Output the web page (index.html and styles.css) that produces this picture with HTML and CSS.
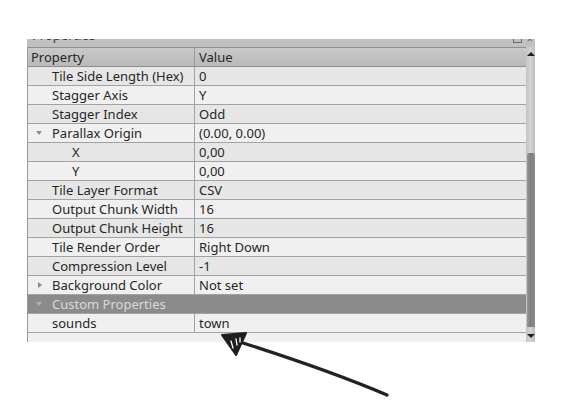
FILE: index.html
```html
<!DOCTYPE html>
<html>
<head>
<meta charset="utf-8">
<link rel="stylesheet" href="styles.css">
</head>
<body>
<div class="page">
  <div class="panel">
    <div class="titlebar">
      <span class="title">Properties</span>
      <span class="tbtns"><span class="tb-float"></span><span class="tb-close">×</span></span>
    </div>
    <div class="body">
      <div class="table">
        <div class="row head"><div class="c1">Property</div><div class="c2">Value</div></div>
        <div class="row a"><div class="c1 l1">Tile Side Length (Hex)</div><div class="c2">0</div></div>
        <div class="row b"><div class="c1 l1">Stagger Axis</div><div class="c2">Y</div></div>
        <div class="row a"><div class="c1 l1">Stagger Index</div><div class="c2">Odd</div></div>
        <div class="row b"><div class="c1 l1"><span class="exp down"></span>Parallax Origin</div><div class="c2">(0.00, 0.00)</div></div>
        <div class="row a"><div class="c1 l2">X</div><div class="c2">0,00</div></div>
        <div class="row b"><div class="c1 l2">Y</div><div class="c2">0,00</div></div>
        <div class="row a"><div class="c1 l1">Tile Layer Format</div><div class="c2">CSV</div></div>
        <div class="row b"><div class="c1 l1">Output Chunk Width</div><div class="c2">16</div></div>
        <div class="row a"><div class="c1 l1">Output Chunk Height</div><div class="c2">16</div></div>
        <div class="row b"><div class="c1 l1">Tile Render Order</div><div class="c2">Right Down</div></div>
        <div class="row a"><div class="c1 l1">Compression Level</div><div class="c2">-1</div></div>
        <div class="row b"><div class="c1 l1"><span class="exp right"></span>Background Color</div><div class="c2">Not set</div></div>
        <div class="row group"><div class="gl l1"><span class="exp down light"></span>Custom Properties</div></div>
        <div class="row b"><div class="c1 l1">sounds</div><div class="c2">town</div></div>
        <div class="filler"></div>
      </div>
      <div class="scrollbar">
        <div class="sb-up"></div>
        <div class="sb-track"><div class="sb-thumb"></div></div>
        <div class="sb-down"></div>
      </div>
    </div>
  </div>
  <svg class="annot" width="570" height="417" viewBox="0 0 570 417">
    <path d="M243 343 C 290 358, 340 375, 387 395" stroke="#222" stroke-width="3.2" fill="none" stroke-linecap="round"/>
    <path d="M222 335 L246 333 L236 355 Z" fill="#1e1e1e" stroke="#1e1e1e" stroke-width="2" stroke-linejoin="round"/>
    <path d="M231 341 L233 348 M236 339 L237 345 M240 338 L240 342" stroke="#fff" stroke-width="1.3" stroke-linecap="round"/>
  </svg>
</div>
</body>
</html>
```
FILE: styles.css
```css
html, body {
  margin: 0;
  padding: 0;
  background: #ffffff;
}
.page {
  position: relative;
  width: 570px;
  height: 417px;
  padding-top: 39px;
  padding-left: 27px;
  box-sizing: border-box;
  font-family: "Noto Sans", "Open Sans", sans-serif;
  font-size: 13px;
  color: #262626;
}
.panel {
  width: 508px;
  height: 303px;
  display: flex;
  flex-direction: column;
  background: #c0c0c0;
}
.titlebar {
  height: 8px;
  overflow: hidden;
  display: flex;
  justify-content: space-between;
  background: #c0c0c0;
  position: relative;
}
.title {
  display: block;
  margin-top: -12px;
  padding-left: 5px;
  line-height: 16px;
  color: #3a3a3a;
}
.tbtns {
  display: flex;
  gap: 5px;
  margin-top: -5px;
  padding-right: 2px;
}
.tb-float {
  display: block;
  width: 9px;
  height: 9px;
  border: 1px solid #6a6a6a;
  box-sizing: border-box;
}
.tb-close {
  line-height: 10px;
  font-size: 11px;
  color: #6a6a6a;
}
.body {
  flex: 1;
  display: flex;
  min-height: 0;
}
.table {
  flex: 1;
  display: flex;
  flex-direction: column;
  background: #f0f0f0;
  border-left: 1px solid #9a9a9a;
}
.row {
  display: grid;
  grid-template-columns: 167px 1fr;
  height: 18px;
  line-height: 18px;
  border-bottom: 1px solid #a2a2a2;
  white-space: nowrap;
}
.row.head {
  background: linear-gradient(#c9c9c9, #b9b9b9);
  border-top: 1px solid #8e8e8e;
  border-bottom: 1px solid #8e8e8e;
}
.row.head .c1 {
  padding-left: 3px;
}
.row.a { background: #e6e6e6; }
.row.b { background: #f0f0f0; }
.row.group {
  display: block;
  background: #8b8b8b;
  color: #dadada;
}
.c1 {
  border-right: 1px solid #a2a2a2;
  position: relative;
  overflow: hidden;
}
.row.head .c1 { border-right-color: #9a9a9a; }
.c2 {
  padding-left: 4px;
  overflow: hidden;
}
.l1 { padding-left: 24px; }
.l2 { padding-left: 44px; }
.gl { position: relative; }
.exp {
  position: absolute;
  left: 8px;
  top: 7px;
  width: 0;
  height: 0;
}
.exp.down {
  border-left: 3px solid transparent;
  border-right: 3px solid transparent;
  border-top: 4px solid #8c8c8c;
}
.exp.down.light {
  border-top-color: #b4b4b4;
}
.exp.right {
  left: 10px;
  top: 6px;
  border-top: 3px solid transparent;
  border-bottom: 3px solid transparent;
  border-left: 4px solid #8c8c8c;
}
.filler {
  flex: 1;
  background: #f0f0f0;
}
.scrollbar {
  width: 9px;
  display: flex;
  flex-direction: column;
  background: linear-gradient(90deg, #c4c4c4, #d4d4d4 50%, #bcbcbc);
}
.sb-up, .sb-down {
  height: 12px;
  position: relative;
}
.sb-up::after, .sb-down::after {
  content: "";
  position: absolute;
  left: 1px;
  width: 0;
  height: 0;
  border-left: 4px solid transparent;
  border-right: 4px solid transparent;
}
.sb-up::after {
  top: 5px;
  border-bottom: 4px solid #202020;
}
.sb-down::after {
  top: 4px;
  border-top: 4px solid #202020;
}
.sb-track {
  flex: 1;
  display: flex;
  flex-direction: column;
  justify-content: flex-end;
  padding-bottom: 3px;
}
.sb-thumb {
  height: 174px;
  margin-left: 1px;
  margin-right: 0;
  border-radius: 2px 2px 0 0;
  background: linear-gradient(90deg, #9a9a9a, #7e7e7e 40%, #8a8a8a);
}
.annot {
  position: absolute;
  left: 0;
  top: 0;
  pointer-events: none;
}
```
